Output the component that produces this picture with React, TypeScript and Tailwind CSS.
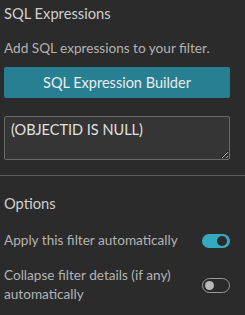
import React from "react";

function Toggle({ on }: { on: boolean }) {
  if (on) {
    return (
      <div className="relative h-[14px] w-[28px] shrink-0 rounded-full bg-[#35a9bd]">
        <div className="absolute right-[3px] top-[2px] h-[10px] w-[10px] rounded-full bg-[#2b2b2b]" />
      </div>
    );
  }
  return (
    <div className="relative h-[15px] w-[28px] shrink-0 rounded-full border border-[#9a9a9a] bg-[#2b2b2b]">
      <div className="absolute left-[2px] top-[2px] h-[9px] w-[9px] rounded-full bg-[#b8b8b8]" />
    </div>
  );
}

export default function App() {
  return (
    <div
      className="h-[315px] w-[245px] overflow-hidden bg-[#2b2b2b] text-[#c4c4c4]"
      style={{ fontFamily: "Lato, 'Open Sans', sans-serif" }}
    >
      <div className="px-[4px] pt-[3px]">
        <div className="text-[14.7px] leading-[20px] text-[#cfcfcf]">SQL Expressions</div>
        <div className="mt-[16px] text-[13.6px] leading-[18px] text-[#b3b3b3]">
          Add SQL expressions to your filter.
        </div>
        <button className="mt-[10px] flex h-[31px] w-[226px] items-center justify-center rounded-[2px] bg-[#287f91] text-[14.5px] text-[#ececec]">
          SQL Expression Builder
        </button>
        <textarea
          className="mt-[18px] block h-[44px] w-[226px] resize-y rounded-[2px] border border-[#6a6a6a] bg-[#353535] px-[6px] py-[3px] text-[14.5px] leading-[20px] text-[#e0e0e0] outline-none"
          defaultValue="(OBJECTID IS NULL)"
        />
      </div>
      <div className="mt-[15px] h-px w-full bg-[#5c5c5c]" />
      <div className="px-[4px] pt-[17px]">
        <div className="text-[14.7px] leading-[20px] text-[#cfcfcf]">Options</div>
        <div className="mt-[18px] flex w-[226px] items-center justify-between">
          <span className="text-[13.6px] leading-[19px] text-[#b3b3b3]">Apply this filter automatically</span>
          <Toggle on={true} />
        </div>
        <div className="mt-[16px] flex w-[226px] items-center justify-between">
          <span className="w-[185px] text-[13.6px] leading-[19px] text-[#b3b3b3]">
            Collapse filter details (if any) automatically
          </span>
          <Toggle on={false} />
        </div>
      </div>
    </div>
  );
}
